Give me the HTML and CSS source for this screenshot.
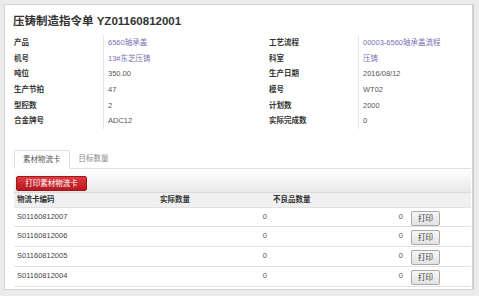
FILE: index.html
```html
<!DOCTYPE html>
<html lang="zh-CN">
<head>
<meta charset="utf-8">
<title>压铸制造指令单</title>
<link rel="stylesheet" href="styles.css">
</head>
<body>
<div class="card">
  <h1 class="title">压铸制造指令单 YZ01160812001</h1>
  <div class="fields">
    <div class="lbl">产品</div><div class="val"><a class="link">6560轴承盖</a></div>
    <div class="lbl">工艺流程</div><div class="val"><a class="link">00003-6560轴承盖流程</a></div>
    <div class="lbl">机号</div><div class="val"><a class="link">13#东芝压铸</a></div>
    <div class="lbl">科室</div><div class="val"><a class="link">压铸</a></div>
    <div class="lbl">吨位</div><div class="val">350.00</div>
    <div class="lbl">生产日期</div><div class="val">2016/08/12</div>
    <div class="lbl">生产节拍</div><div class="val">47</div>
    <div class="lbl">模号</div><div class="val">WT02</div>
    <div class="lbl">型腔数</div><div class="val">2</div>
    <div class="lbl">计划数</div><div class="val">2000</div>
    <div class="lbl">合金牌号</div><div class="val">ADC12</div>
    <div class="lbl">实际完成数</div><div class="val">0</div>
  </div>
  <div class="section">
    <div class="tabs">
      <div class="tab active">素材物流卡</div>
      <div class="tab">目标数量</div>
    </div>
    <div class="toolbar">
      <button class="btn-red">打印素材物流卡</button>
    </div>
    <div class="grid head">
      <div class="c1">物流卡编码</div>
      <div class="c2">实际数量</div>
      <div class="c3">不良品数量</div>
      <div class="c4"></div>
    </div>
    <div class="grid row">
      <div class="c1">S01160812007</div>
      <div class="c2 num">0</div>
      <div class="c3 num">0</div>
      <div class="c4"><button class="btn-print">打印</button></div>
    </div>
    <div class="grid row">
      <div class="c1">S01160812006</div>
      <div class="c2 num">0</div>
      <div class="c3 num">0</div>
      <div class="c4"><button class="btn-print">打印</button></div>
    </div>
    <div class="grid row">
      <div class="c1">S01160812005</div>
      <div class="c2 num">0</div>
      <div class="c3 num">0</div>
      <div class="c4"><button class="btn-print">打印</button></div>
    </div>
    <div class="grid row">
      <div class="c1">S01160812004</div>
      <div class="c2 num">0</div>
      <div class="c3 num">0</div>
      <div class="c4"><button class="btn-print">打印</button></div>
    </div>
  </div>
</div>
</body>
</html>
```

FILE: styles.css
```css
* { box-sizing: border-box; }
html, body {
  margin: 0;
  padding: 0;
}
body {
  background: #ebebeb;
  font-family: "Liberation Sans", "Noto Sans CJK SC", sans-serif;
  font-size: 7.5px;
  color: #444;
  width: 479px;
  height: 296px;
  overflow: hidden;
}
.card {
  margin: 4px 0 0 4px;
  width: 470px;
  height: 286px;
  background: #fff;
  border: 1px solid #d6d6d6;
  border-right: 2px solid #cfcfcf;
}
.title {
  margin: 0;
  padding: 9px 0 0 8px;
  font-size: 11.5px;
  line-height: 14px;
  font-weight: bold;
  color: #333;
}
.fields {
  margin-top: 7px;
  padding-left: 9px;
  display: grid;
  grid-template-columns: 89px 166px 89px 1fr;
  grid-auto-rows: 15.7px;
  line-height: 15.7px;
}
.lbl {
  font-weight: bold;
  color: #333;
}
.val {
  border-left: 1px solid #e6e6e6;
  padding-left: 4px;
  color: #555;
}
.link {
  color: #7672b4;
  text-decoration: none;
}
.section {
  margin-top: 20.5px;
  padding: 0 1px 0 9px;
}
.tabs {
  display: flex;
  height: 19px;
  border-bottom: 1px solid #dedede;
}
.tab {
  padding: 0 9px;
  line-height: 18px;
  color: #8a8a8a;
}
.tab.active {
  color: #555;
  background: #fff;
  border: 1px solid #dedede;
  border-bottom-color: #fff;
  border-radius: 2px 2px 0 0;
  height: 19px;
  padding: 0 8px;
}
.toolbar {
  height: 24px;
  padding: 7px 0 0 2px;
  background: linear-gradient(#ffffff, #e9e9e9);
  border-bottom: 1px solid #dadada;
}
.btn-red {
  display: block;
  margin: 0;
  width: 71px;
  height: 15px;
  padding: 0;
  font-family: inherit;
  font-size: 7.5px;
  line-height: 13px;
  color: #fff;
  background: linear-gradient(#dc3a40, #b5191f);
  border: 1px solid #a3161b;
  border-radius: 2px;
}
.grid {
  display: grid;
  grid-template-columns: 143px 113px 136px 1fr;
}
.head {
  height: 15px;
  line-height: 14px;
  background: #f0f0f0;
  border-bottom: 1px solid #e2e2e2;
  font-weight: bold;
  color: #333;
}
.row {
  height: 19.75px;
  border-bottom: 1px solid #e3e3e3;
  line-height: 16px;
  align-items: start;
  padding-top: 1px;
}
.c1 { padding-left: 3px; }
.c2 { padding-left: 3px; }
.c3 { padding-left: 3px; }
.num {
  text-align: right;
  padding-right: 3px;
  color: #555;
}
.c4 {
  padding-left: 5px;
}
.btn-print {
  display: block;
  margin: 2px 0 0 0;
  width: 29px;
  height: 15px;
  padding: 0;
  font-family: inherit;
  font-size: 7.5px;
  line-height: 13px;
  color: #333;
  background: linear-gradient(#f7f7f7, #e2e2e2);
  border: 1px solid #a9a9a9;
  border-radius: 2px;
}
```
